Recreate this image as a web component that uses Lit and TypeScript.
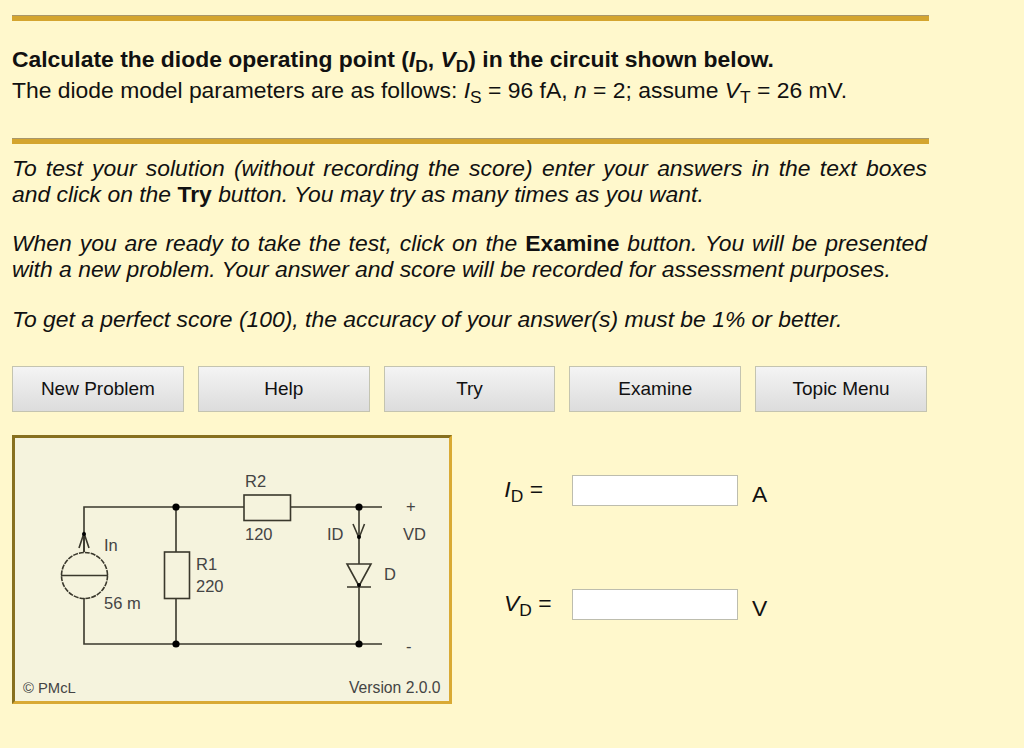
import { LitElement, html, svg, css } from 'lit';
import { customElement } from 'lit/decorators.js';

// Circuit diagram for the diode problem, drawn at its on-screen size
const circuit = svg`
  <svg class="circuit" width="434" height="263" viewBox="15 438 434 263">
    <g fill="none" stroke="#3a382c" stroke-width="1.6">
      <path d="M84 552V507H382"/>
      <path d="M84 598V644H382"/>
      <path d="M176 507V552M176 598V644"/>
      <path d="M359 507V564M359 587V644"/>
      <rect x="164.5" y="552" width="25" height="46.5" fill="#f5f3dd"/>
      <rect x="244" y="495" width="46.5" height="25.5" fill="#f5f3dd"/>
      <circle cx="84.5" cy="575.5" r="23" stroke-dasharray="5 1"/>
      <path d="M61 575.5H108"/>
      <path d="M84 533V552M79 548L84 533L89 548"/>
      <path d="M353 524L359 538L364.5 524"/>
      <path d="M347 564H371L359 586ZM347 587H371"/>
    </g>
    <g fill="#000">
      <circle cx="176" cy="507" r="3.6"/>
      <circle cx="176" cy="644" r="3.6"/>
      <circle cx="359" cy="507" r="3.6"/>
      <circle cx="359" cy="644" r="3.6"/>
      <circle cx="84" cy="534" r="2"/>
      <circle cx="359" cy="537" r="2"/>
      <circle cx="359" cy="585" r="2"/>
    </g>
    <g class="labels">
      <text x="104" y="551">In</text>
      <text x="104" y="609">56 m</text>
      <text x="196" y="570">R1</text>
      <text x="196" y="592">220</text>
      <text x="245" y="487">R2</text>
      <text x="245" y="540">120</text>
      <text x="327" y="540">ID</text>
      <text x="403" y="540">VD</text>
      <text x="384" y="580">D</text>
      <text x="406" y="512">+</text>
      <text x="406" y="652">-</text>
      <text class="small" x="38" y="693">PMcL</text>
      <text class="small" x="23" y="693">©</text>
      <text class="version" x="349" y="693">Version 2.0.0</text>
    </g>
  </svg>
`;

@customElement('app-root')
export class AppRoot extends LitElement {
  static styles = css`
    :host {
      display: block;
      min-height: 748px;
      box-sizing: border-box;
      padding: 15px 95px 0 12px;
      background: #fff8cc;
      color: #111;
      font-family: 'Liberation Sans', Arial, sans-serif;
      font-size: 22.9px;
      line-height: 26px;
    }

    .rule {
      height: 6px;
      background: #d4a52f;
      border-top: 1px solid #a8976a;
      box-sizing: border-box;
    }

    .problem {
      margin: 23px 0 32px;
      line-height: 31px;
    }

    .problem p {
      margin: 0;
    }

    sub {
      font-size: 0.76em;
      line-height: 0;
      vertical-align: -0.28em;
    }

    .notes {
      margin-top: 11px;
      font-style: italic;
    }

    .notes p {
      margin: 0 0 23px;
      text-align: justify;
      padding-right: 2px;
    }

    .notes p:nth-child(2) {
      margin-bottom: 24px;
    }

    .notes b {
      font-style: normal;
    }

    .buttons {
      display: grid;
      grid-template-columns: repeat(5, 171.8px);
      gap: 14px;
      margin-top: 34px;
    }

    button {
      height: 46px;
      padding: 0;
      background: linear-gradient(#f4f4f4, #dcdcdc);
      border: 1px solid #c4c4b0;
      color: #111;
      font-family: inherit;
      font-size: 19px;
    }

    .lower {
      display: flex;
      margin-top: 23px;
    }

    .picture {
      width: 440px;
      height: 269px;
      box-sizing: border-box;
      border: 3px solid;
      border-color: #87701f #d9aa34 #d9aa34 #87701f;
      background: #f5f3dd;
      line-height: 0;
    }

    .circuit .labels text {
      fill: #444;
      font-family: 'Liberation Sans', Arial, sans-serif;
      font-size: 16.5px;
    }

    .circuit .labels text.small {
      font-size: 14.8px;
    }

    .circuit .labels text.version {
      font-size: 15.7px;
    }

    .answers {
      display: grid;
      grid-template-columns: 68px 166px auto;
      row-gap: 76px;
      align-content: start;
      align-items: start;
      margin: 40px 0 0 52px;
    }

    .answers label {
      text-align: right;
      padding-right: 29px;
      line-height: 28px;
      white-space: nowrap;
    }

    .answers input {
      box-sizing: border-box;
      width: 166px;
      height: 31px;
      margin: 0;
      background: #fff;
      border: 1px solid #bdbdae;
    }

    .answers span {
      margin-left: 14px;
      line-height: 38px;
    }
  `;

  render() {
    const buttons = ['New Problem', 'Help', 'Try', 'Examine', 'Topic Menu'];
    return html`
      <div class="rule"></div>
      <div class="problem">
        <p><b>Calculate the diode operating point (<i>I</i><sub>D</sub>, <i>V</i><sub>D</sub>) in the circuit shown below.</b></p>
        <p>The diode model parameters are as follows: <i>I</i><sub>S</sub> = 96 fA, <i>n</i> = 2; assume <i>V</i><sub>T</sub> = 26 mV.</p>
      </div>
      <div class="rule"></div>
      <div class="notes">
        <p>To test your solution (without recording the score) enter your answers in the text boxes and click on the <b>Try</b> button. You may try as many times as you want.</p>
        <p>When you are ready to take the test, click on the <b>Examine</b> button. You will be presented with a new problem. Your answer and score will be recorded for assessment purposes.</p>
        <p>To get a perfect score (100), the accuracy of your answer(s) must be 1% or better.</p>
      </div>
      <div class="buttons">
        ${buttons.map((label) => html`<button>${label}</button>`)}
      </div>
      <div class="lower">
        <div class="picture">${circuit}</div>
        <div class="answers">
          <label><i>I</i><sub>D</sub> =</label>
          <input type="text" />
          <span>A</span>
          <label><i>V</i><sub>D</sub> =</label>
          <input type="text" />
          <span>V</span>
        </div>
      </div>
    `;
  }
}
